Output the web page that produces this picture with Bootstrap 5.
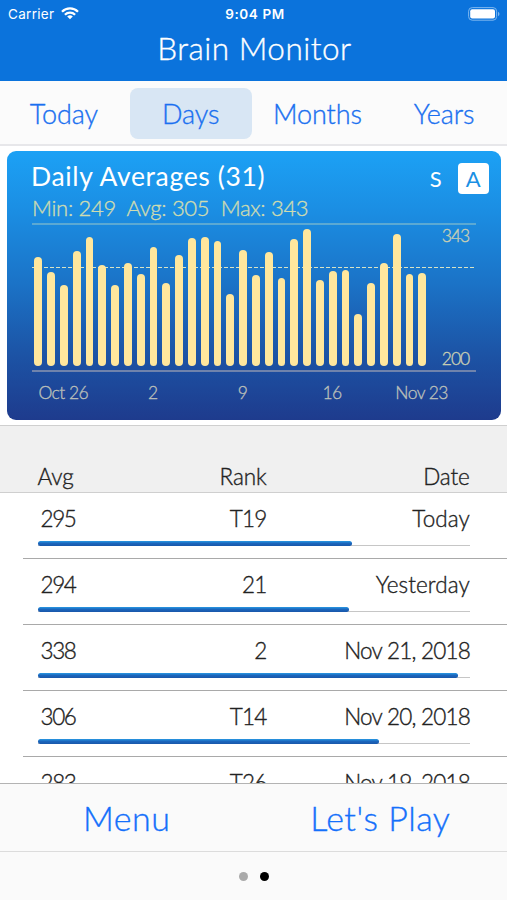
<!doctype html>
<html lang="en">
<head>
<meta charset="utf-8">
<meta name="viewport" content="width=device-width, initial-scale=1">
<title>Brain Monitor</title>
<link href="https://cdn.jsdelivr.net/npm/bootstrap@5.3.0/dist/css/bootstrap.min.css" rel="stylesheet">
<style>
body{font-family:Lato,"Open Sans",sans-serif;font-weight:300;color:#222;-webkit-text-stroke:.35px currentColor;line-height:1}
.screen{height:900px;overflow:hidden}
.top-bar{height:81px;background:#0b73dc}
.status{height:27px;padding:0 7px 0 8px;font:400 13.5px Inter,sans-serif;letter-spacing:.3px;-webkit-text-stroke:0;display:grid;grid-template-columns:1fr auto 1fr}
.clock{letter-spacing:.6px;padding-left:2px}
.app-title{font-size:31.5px;letter-spacing:.5px;line-height:42px;padding-left:2px}
.tabs{height:65px;background:#fbfbfb;border-bottom:2px solid #e7e7ea;padding-top:7px}
.tab-link{height:51px;margin:0 2px 0 3px;border-radius:8px;font-size:27px;letter-spacing:-.1px;color:#1a70f0;line-height:52px;padding:0;text-decoration:none}
.tab-link.active{background:#d8e6f4}
.panel{margin:5px 6px 5px 7px;height:269px;border-radius:9px;background:linear-gradient(#1ca1f5 0,#1b8ee3 22%,#1b72c6 50%,#1c54a6 75%,#1e3b8d 100%);padding:0 25px}
.panel-title{font-size:26.5px;letter-spacing:.65px;line-height:32px;font-weight:400;-webkit-text-stroke:0;margin:-3px 0 3px -1px}
.stats{font-size:22px;letter-spacing:-.3px;line-height:26px;color:#cfdcb0;white-space:pre}
.panel-top{height:72px;margin-right:-12.5px}
.toggle-set{gap:7px}
.toggle-opt{width:30.5px;height:31px;border-radius:4px;font-size:22px;line-height:32px;font-weight:400;-webkit-text-stroke:0}
.toggle-opt.on{background:#fff;color:#1a90e4}
.plot{height:148.5px;border-top:2px solid #5ba9d3;border-bottom:2px solid #6f83ac}
.mean{left:0;right:0;top:42px;height:1px;background:repeating-linear-gradient(90deg,#d8e3c4 0 4px,transparent 4px 6px)}
.bars{width:396px;padding-left:2.4px;padding-bottom:4px}
.bar{width:7.8px;margin-right:5px;flex:none;border-radius:4px;background:#ffe79d}
.scale{font-size:17.5px;letter-spacing:-1.1px;color:#c9cfb4;padding:2px 7px 2px 0}
.dates{font-size:17.5px;letter-spacing:-.55px;color:#b9bfb9;height:43px;margin-left:-13.5px}
.tick{width:89.6px;text-align:center;flex:none}
.head{height:68px;background:#f0f0f0;border-top:1px solid #cfcfcf;border-bottom:1px solid #cfcfcf;padding:0 37.5px 4px}
.head,.cells{font-size:22.5px}
.cols{display:grid;grid-template-columns:100px 129px 1fr;letter-spacing:-.15px}
.list{height:290px;overflow:hidden}
.entry{height:66px;margin-left:23px;padding:0 37px 0 14.5px;border-bottom:1px solid #a9a9a9}
.cells{height:48px;line-height:51px}
.cells .num{letter-spacing:-1.4px;padding-left:3px}
.cells .rank{letter-spacing:-.8px}
.cells .day{letter-spacing:.1px}
.cells .day.full{letter-spacing:-.78px}
.track{height:6px;background:linear-gradient(transparent 4px,#c6c6c6 4px,#c6c6c6 5px,transparent 5px)}
.fill{height:5px;border-radius:2.5px;background:linear-gradient(#2a9ae4,#1b66bd 45%,#1a57aa)}
.actions{height:69px;background:#fafafa;border-top:1px solid #b3b3b3;border-bottom:1px solid #dcdcdc;font-size:34px}
.actions a{color:#1470fb;text-decoration:none;line-height:67px;letter-spacing:.5px}
.pager{height:48px;background:#fafafa}
.dot{width:9px;height:9px;border-radius:50%;background:#aaa}
</style>
</head>
<body>
<div class="screen d-flex flex-column">
  <header class="top-bar text-white">
    <div class="status align-items-center">
      <span class="d-flex align-items-center gap-2">Carrier
        <svg width="18" height="13" viewBox="0 0 18 13" fill="none" stroke="#fff" stroke-width="2.3" style="margin-left:-1px"><path d="M1 4.7a11.4 11.4 0 0 1 16 0M3.9 7.7a7.3 7.3 0 0 1 10.2 0"/><path d="M9 12.3 6.2 9.6a4 4 0 0 1 5.6 0z" fill="#fff" stroke="none"/></svg>
      </span>
      <span class="clock fw-semibold">9:04 PM</span>
      <svg class="ms-auto" width="32" height="14" viewBox="0 0 32 14"><rect x=".6" y=".6" width="28" height="12.6" rx="3.6" fill="none" stroke="#7db7ef"/><rect x="2.2" y="2.2" width="24.8" height="9.4" rx="2" fill="#fff"/><path d="M30 4.8q1.5.8 1.5 2.2T30 9.2z" fill="#7db7ef"/></svg>
    </div>
    <h1 class="app-title text-center fw-light mb-0">Brain Monitor</h1>
  </header>

  <nav class="tabs">
    <div class="row g-0 text-center">
      <div class="col-3"><a class="tab-link d-block" href="#">Today</a></div>
      <div class="col-3"><a class="tab-link d-block active" href="#">Days</a></div>
      <div class="col-3"><a class="tab-link d-block" href="#">Months</a></div>
      <div class="col-3"><a class="tab-link d-block" href="#">Years</a></div>
    </div>
  </nav>

  <section class="panel text-white flex-shrink-0">
    <div class="panel-top d-flex justify-content-between">
      <div class="pt-2 mt-1">
        <div class="panel-title">Daily Averages (31)</div>
        <div class="stats">Min: 249  Avg: 305  Max: 343</div>
      </div>
      <div class="d-flex text-center pt-2 mt-1 toggle-set">
        <span class="toggle-opt">S</span><span class="toggle-opt on">A</span>
      </div>
    </div>
    <div class="plot d-flex position-relative">
      <div class="mean position-absolute"></div>
      <div class="bars d-flex align-items-end position-relative" id="bars"></div>
      <div class="scale d-flex flex-column justify-content-between ms-auto"><span>343</span><span>200</span></div>
    </div>
    <div class="dates d-flex align-items-center">
      <span class="tick">Oct 26</span><span class="tick">2</span><span class="tick">9</span><span class="tick">16</span><span class="tick">Nov 23</span>
    </div>
  </section>

  <div class="head cols align-items-end flex-shrink-0">
    <span>Avg</span><span class="text-end">Rank</span><span class="text-end">Date</span>
  </div>
  <main class="list flex-shrink-0" id="list"></main>

  <div class="actions row g-0 text-center flex-shrink-0">
    <a class="col-6" href="#">Menu</a><a class="col-6" href="#">Let's Play</a>
  </div>
  <footer class="pager d-flex justify-content-center align-items-center flex-shrink-0">
    <span class="dot me-2"></span><span class="dot bg-black ms-1"></span>
  </footer>
</div>
<script>
const heights = [108.3,93.3,81,115,128.7,100.3,81,103,91.3,118.7,82.7,111,127.7,128.7,125,72,116,90.3,113.7,87.7,126.7,136.7,86,94.7,95.7,51.7,82.7,103,132,92,93];
document.getElementById('bars').innerHTML = heights.map(h => `<span class="bar" style="height:${h}px"></span>`).join('');
const rows = [
  [295,'T19','Today',72.7],[294,'21','Yesterday',72.1],[338,'2','Nov 21, 2018',97.3],
  [306,'T14','Nov 20, 2018',79],[283,'T26','Nov 19, 2018',66]
];
document.getElementById('list').innerHTML = rows.map(([avg, rank, day, pct]) => `
  <div class="entry">
    <div class="cols cells"><span class="num">${avg}</span><span class="rank text-end">${rank}</span><span class="day text-end ${day.includes(',') ? 'full' : ''}">${day}</span></div>
    <div class="track"><div class="fill" style="width:${pct}%"></div></div>
  </div>`).join('');
</script>
<script src="https://cdn.jsdelivr.net/npm/bootstrap@5.3.0/dist/js/bootstrap.bundle.min.js"></script>
</body>
</html>
